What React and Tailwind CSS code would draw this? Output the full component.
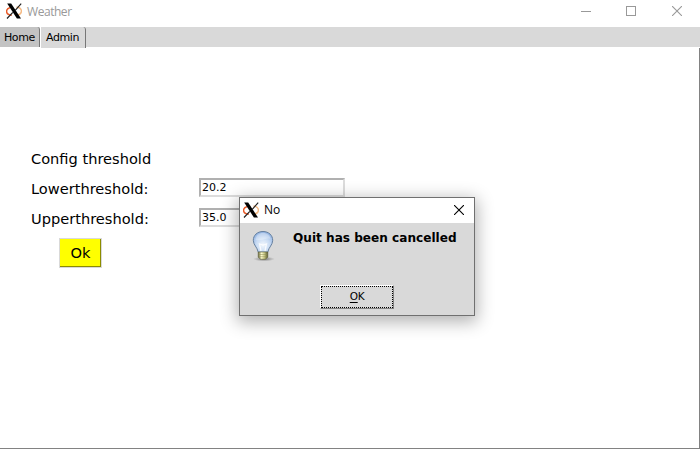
import React from "react";

function XLogo({ className }) {
  return (
    <svg viewBox="0 0 16 16" className={className} fill="none">
      <path d="M4.500 4.500C1.800 5.200 .5 7 .6 8.600c.2 2.300 2.200 3.400 5.200 3.600" stroke="#e85a28" strokeWidth="1.500" />
      <path d="M10.500 4c3 .5 4.900 2 4.900 4.100 0 2.400-2.500 3.900-5.800 4.100" stroke="#f5b983" strokeWidth="1.400" />
      <path d="M1.200.5h4L15 15.500h-4.100z" fill="#000" />
      <path d="M15.200 .7 9 7.600M6.800 9.300 1 15.500" stroke="#222" strokeWidth="1.200" />
    </svg>
  );
}

function Bulb() {
  return (
    <svg viewBox="0 0 24 32" className="h-8 w-6" fill="none">
      <defs>
        <radialGradient id="glass" cx=".5" cy=".65" r=".7">
          <stop offset="0" stopColor="#f2f7fd" />
          <stop offset=".5" stopColor="#c8dbf3" />
          <stop offset="1" stopColor="#86aade" />
        </radialGradient>
        <radialGradient id="shade">
          <stop offset="0" stopColor="#444" stopOpacity=".8" />
          <stop offset="1" stopColor="#777" stopOpacity="0" />
        </radialGradient>
        <linearGradient id="base">
          <stop offset="0" stopColor="#66683a" />
          <stop offset=".35" stopColor="#fffcd0" />
          <stop offset=".65" stopColor="#c5c583" />
          <stop offset="1" stopColor="#55562f" />
        </linearGradient>
      </defs>
      <ellipse cx="13" cy="29" rx="11" ry="2.400" fill="url(#shade)" />
      <path d="M12 1.500c-5.700 0-9.700 3.800-9.700 8.800 0 4.700 4 6.800 4.900 11.800h9.600c.9-5 4.900-7.100 4.900-11.800 0-5-4-8.800-9.700-8.800z" fill="url(#glass)" stroke="#66809f" />
      <path d="M4.500 10C5 5.500 8 3 12 3s7 2.500 7.500 6c-4-2-9 2.500-15 1z" fill="#fff" opacity=".3" />
      <path d="m10 21-1.500-7 3.500 1 3.500-1-1.500 7" stroke="#fff" strokeWidth="1.300" opacity=".8" />
      <path d="M7.200 22h9.600v5.200l-2.500 2h-4.600l-2.500-2z" fill="url(#base)" stroke="#62633a" strokeWidth=".6" />
      <path d="M8 24.500h8M8 26.700h8" stroke="#8c8d52" strokeWidth=".5" />
    </svg>
  );
}

function CloseIcon({ className }) {
  return (
    <svg viewBox="0 0 10 10" className={className} stroke="currentColor" strokeWidth="1.100">
      <path d="m0 0 10 10M10 0 0 10" />
    </svg>
  );
}

function Field({ label, value }) {
  return (
    <div className="flex h-[30px] items-start">
      <label className="w-[168px] pt-[2px] text-[14.6px] leading-[17px]">{label}</label>
      <div className="h-[19px] w-[146px] border-2 border-t-[#b0b0b0] border-r-[#dcdcdc] border-b-[#dcdcdc] border-l-[#b0b0b0] bg-white pl-px text-[11px] leading-[15px]">
        {value}
      </div>
    </div>
  );
}

export default function App() {
  return (
    <div className="relative flex h-[449px] w-[700px] flex-col overflow-hidden bg-white font-['DejaVu_Sans',sans-serif] text-black">
      <header className="flex h-[27px] shrink-0 items-start bg-white pl-1.5 font-['Open_Sans',sans-serif] text-[12px] text-[#999]">
        <XLogo className="mt-[3px] h-4 w-4" />
        <span className="ml-[5px] mt-[3px] leading-[17px] tracking-[-0.45px]">Weather</span>
        <div className="ml-auto mr-[18px] flex pt-[6px]">
          <div className="mt-[5px] h-px w-[10px] bg-[#999]" />
          <div className="ml-[35px] h-[10px] w-[10px] border border-[#999]" />
          <CloseIcon className="ml-[36px] h-[10px] w-[10px]" />
        </div>
      </header>
      <nav className="flex h-5 shrink-0 bg-[#d9d9d9] text-[11px] leading-[21px] tracking-[-0.4px]">
        <div className="h-5 w-10 rounded-tr-[3px] border-r border-[#777] bg-[#c3c3c3] pl-1">Home</div>
        <div className="h-[21px] w-[46px] rounded-tr-[3px] border-l border-r border-l-white border-r-[#777] bg-[#d9d9d9] pl-[5px]">Admin</div>
      </nav>
      <main className="mt-px flex-1 border-b border-r border-[#828282] pl-[31px] pt-[102px]">
        <h1 className="h-7 text-[14.6px] leading-[17px]">Config threshold</h1>
        <Field label="Lowerthreshold:" value="20.2" />
        <Field label="Upperthreshold:" value="35.0" />
        <button className="ml-7 block h-[30px] w-[43px] border border-[#d9d9d9] bg-[#ff0] text-[14.6px] leading-7">
          <span className="block h-full border-b border-r border-[#8c8c00] pl-px">Ok</span>
        </button>
      </main>

      <section className="absolute left-[239px] top-[197px] flex h-[119px] w-[236px] flex-col border border-[#707070] bg-[#d9d9d9] shadow-[0_4px_16px_2px_rgba(0,0,0,0.3)]">
        <div className="flex h-[25px] shrink-0 items-start bg-white pl-[3px] font-['Open_Sans',sans-serif] text-[12px]">
          <XLogo className="mt-1 h-4 w-4" />
          <span className="ml-[5px] mt-[3px] leading-[17px]">No</span>
          <CloseIcon className="ml-auto mr-[10px] mt-[7px] h-[10px] w-[10px]" />
        </div>
        <div className="flex h-[62px] shrink-0 pl-[11px] pt-[7px]">
          <Bulb />
          <p className="ml-[18px] mt-px whitespace-nowrap text-[12.1px] font-bold leading-[15px]">Quit has been cancelled</p>
        </div>
        <button className="ml-20 h-6 w-[74px] border border-t-white border-r-[#828282] border-b-[#828282] border-l-white text-[10.500px] leading-[19px] tracking-[-0.3px]">
          <span className="block h-full border border-dotted border-black"><u className="underline-offset-2">O</u>K</span>
        </button>
      </section>
    </div>
  );
}
